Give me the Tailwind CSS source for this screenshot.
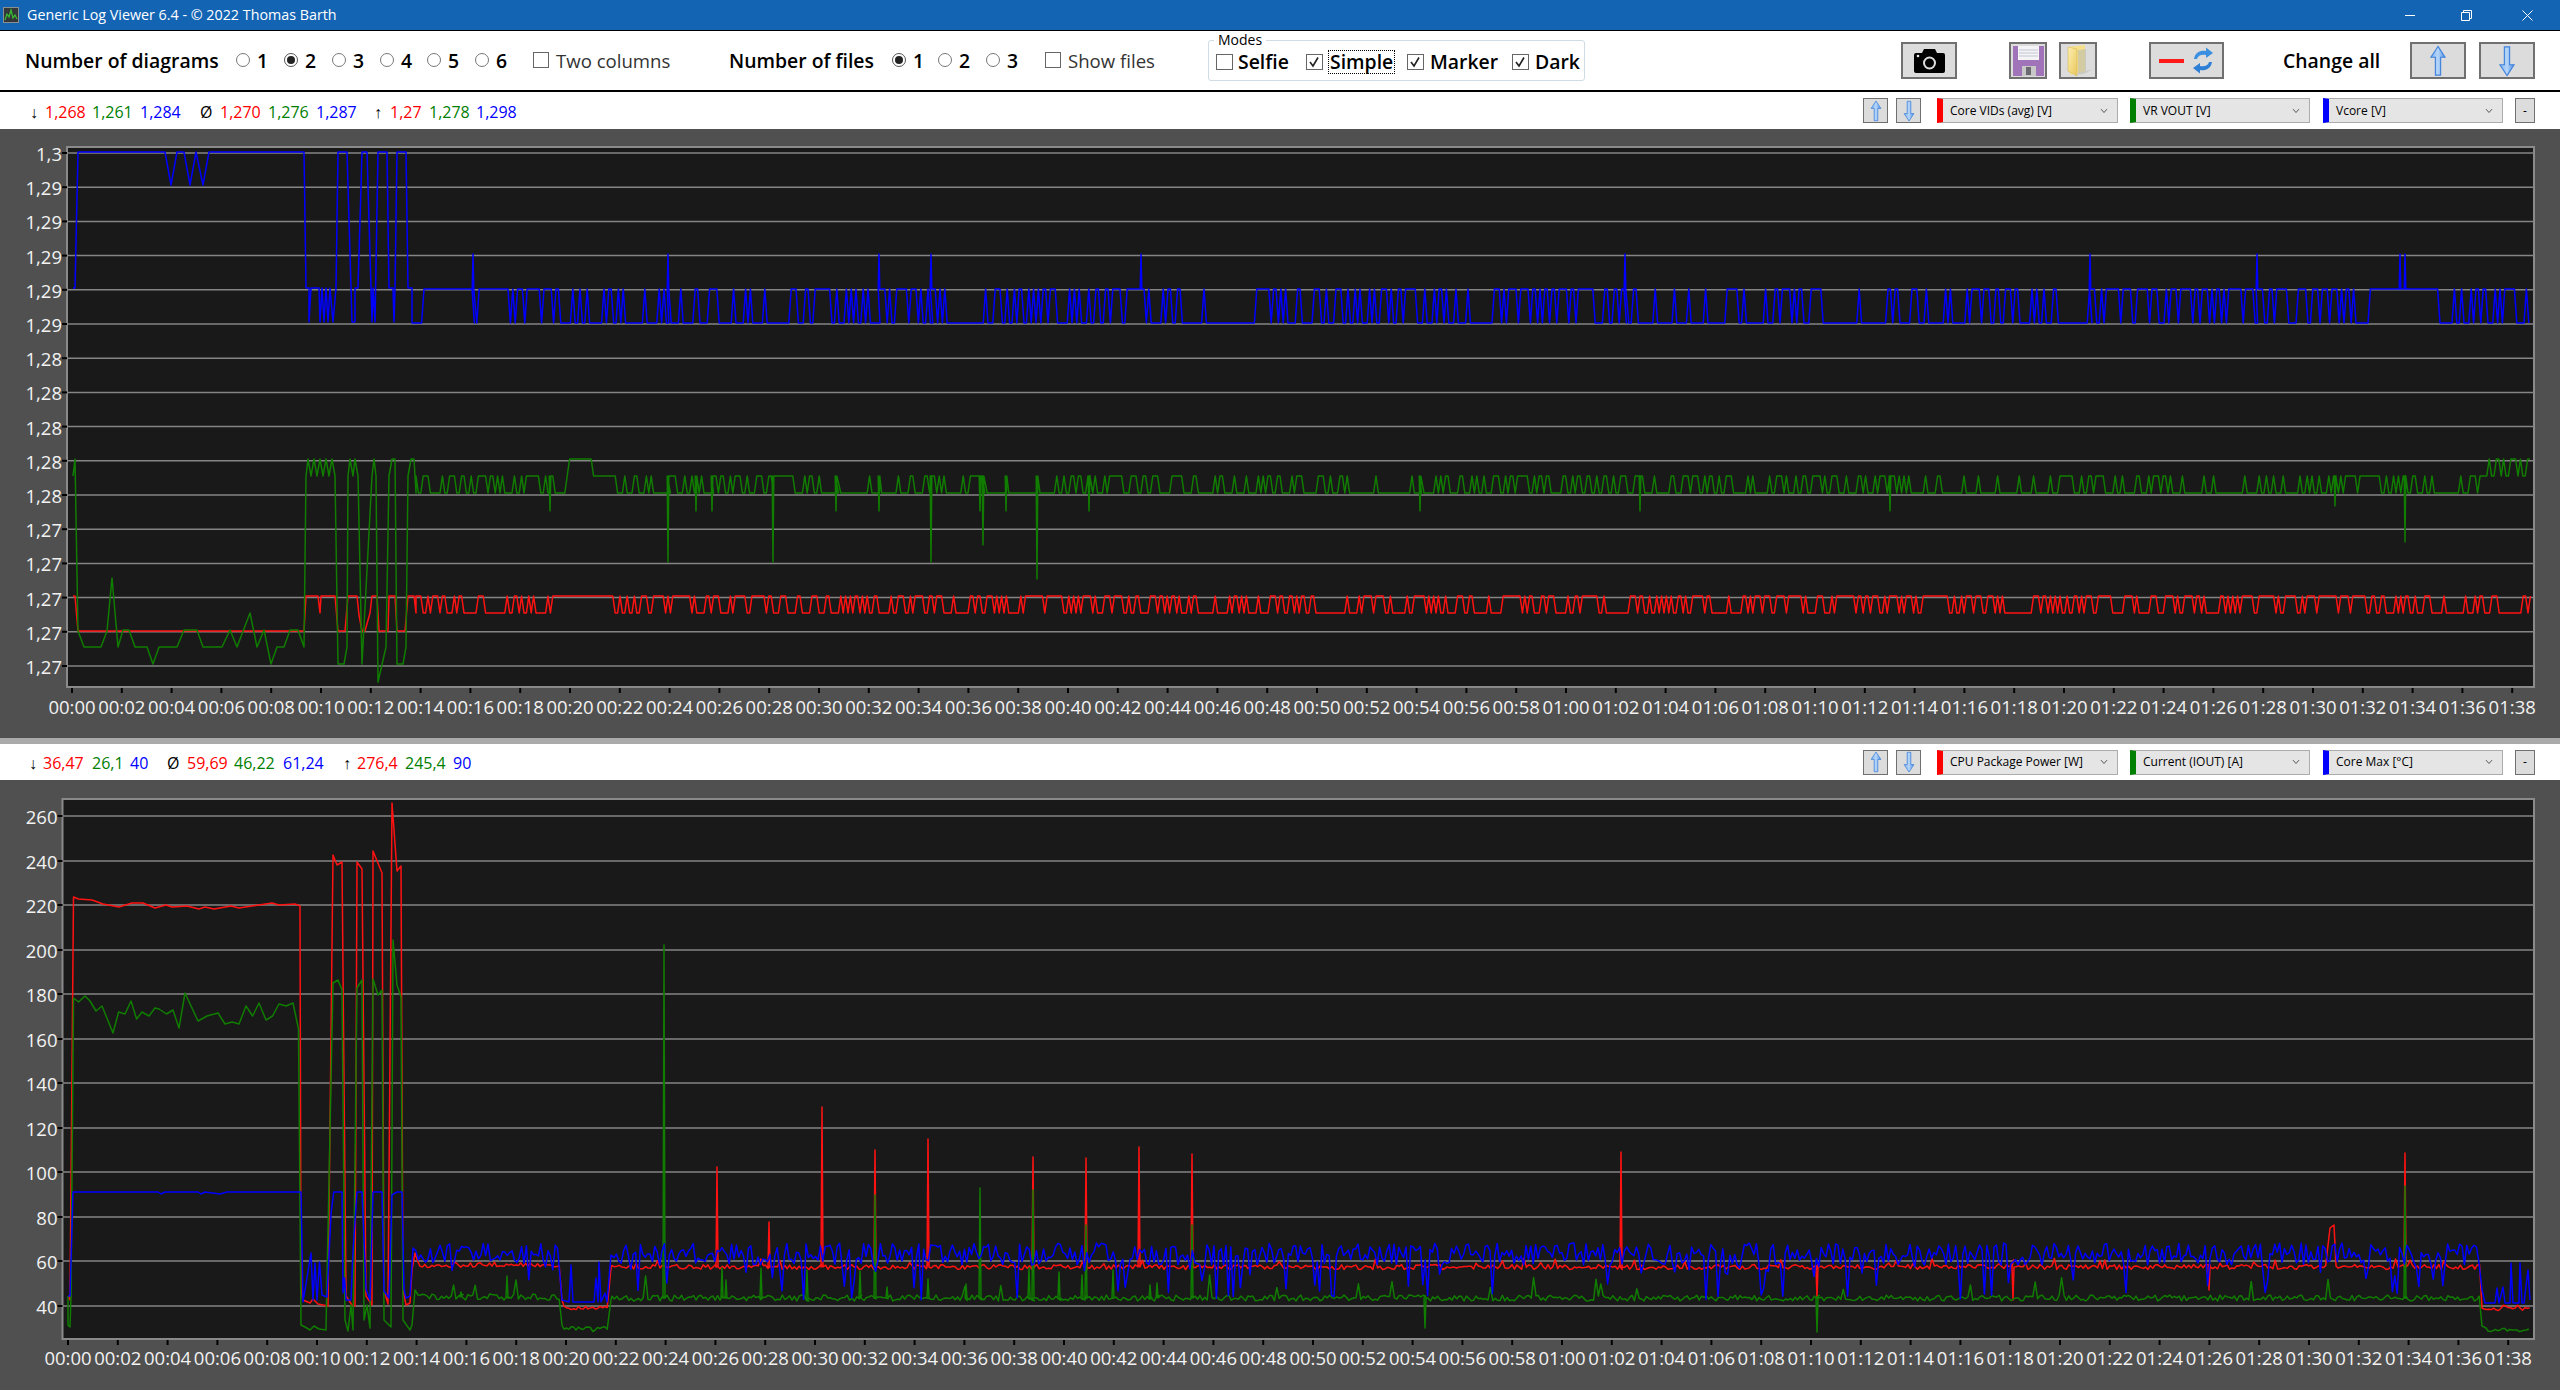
<!DOCTYPE html>
<html lang="en">
<head>
    <meta charset="UTF-8">
    <title>Generic Log Viewer 6.4</title>
    <script src="https://cdn.jsdelivr.net/npm/@tailwindcss/browser@4"></script>
</head>
<body class="w-[2560px] h-[1390px] overflow-hidden bg-white font-['Open_Sans',sans-serif] text-black">
    <svg class="absolute w-0 h-0">
        <defs>
            <linearGradient id="arrowFill" x1="0" y1="0" x2="1" y2="0">
                <stop offset="0" stop-color="#7fb2ef"/>
                <stop offset="0.5" stop-color="#b7d6f8"/>
                <stop offset="1" stop-color="#4f8fe6"/>
            </linearGradient>
            <linearGradient id="folderFill" x1="0" y1="0" x2="1" y2="1">
                <stop offset="0" stop-color="#fdf0b0"/>
                <stop offset="1" stop-color="#e9c65c"/>
            </linearGradient>
            <symbol id="arrowUp" viewBox="0 0 20 34">
                <path d="M10 1.5 L17.5 13 H12.8 V32 H7.2 V13 H2.5 Z" fill="url(#arrowFill)" stroke="#3f82dc" stroke-width="1.2"/>
            </symbol>
            <symbol id="arrowDown" viewBox="0 0 20 34">
                <path d="M10 32.5 L17.5 21 H12.8 V2 H7.2 V21 H2.5 Z" fill="url(#arrowFill)" stroke="#3f82dc" stroke-width="1.2"/>
            </symbol>
            <symbol id="chevron" viewBox="0 0 10 8">
                <path d="M1 1.5 L5 6 L9 1.5" fill="none" stroke="#555" stroke-width="1.3"/>
            </symbol>
            <symbol id="tick" viewBox="0 0 14 14">
                <path d="M3 7 L6 11 L11 2.5" fill="none" stroke="#222" stroke-width="1.6"/>
            </symbol>
        </defs>
    </svg>

    <!-- title bar -->
    <div class="h-[31px] bg-[#1464b4] border-b border-black flex items-center text-white">
        <svg class="ml-[3px] w-[16px] h-[16px]" viewBox="0 0 16 16">
            <rect x="0.5" y="0.5" width="15" height="15" fill="#33373a" stroke="#8a8f90"/>
            <path d="M2 13 L4 7 L6 10 L8 3 L10 11 L12 8 L14 12" fill="none" stroke="#38c030" stroke-width="1.2"/>
        </svg>
        <span class="ml-[8px] text-[14.3px]">Generic Log Viewer 6.4 - © 2022 Thomas Barth</span>
        <div class="ml-auto flex items-center">
            <svg class="w-[10px] h-[10px]" viewBox="0 0 10 10"><path d="M0 5.5 H10" stroke="#fff"/></svg>
            <svg class="ml-[46px] w-[11px] h-[11px]" viewBox="0 0 11 11"><path d="M0.5 2.5 H8.5 V10.5 H0.5 Z M2.5 2.5 V0.5 H10.5 V8.5 H8.5" fill="none" stroke="#fff"/></svg>
            <svg class="ml-[50px] mr-[27px] w-[11px] h-[11px]" viewBox="0 0 11 11"><path d="M0.5 0.5 L10.5 10.5 M10.5 0.5 L0.5 10.5" stroke="#fff"/></svg>
        </div>
    </div>

    <!-- toolbar -->
    <div class="h-[61px] border-b-2 border-black flex items-center pl-[25px] text-[19.4px] font-semibold">
        <span class="w-[211px] whitespace-nowrap">Number of diagrams</span>
        <label class="w-[48px] flex items-center gap-[7px]"><span class="w-[14px] h-[14px] rounded-full border border-[#777]"></span>1</label>
        <label class="w-[48px] flex items-center gap-[7px]"><span class="w-[14px] h-[14px] rounded-full border border-[#555] flex items-center justify-center"><span class="w-[8px] h-[8px] rounded-full bg-[#222]"></span></span>2</label>
        <label class="w-[48px] flex items-center gap-[7px]"><span class="w-[14px] h-[14px] rounded-full border border-[#777]"></span>3</label>
        <label class="w-[47px] flex items-center gap-[7px]"><span class="w-[14px] h-[14px] rounded-full border border-[#777]"></span>4</label>
        <label class="w-[48px] flex items-center gap-[7px]"><span class="w-[14px] h-[14px] rounded-full border border-[#777]"></span>5</label>
        <label class="w-[58px] flex items-center gap-[7px]"><span class="w-[14px] h-[14px] rounded-full border border-[#777]"></span>6</label>
        <label class="w-[196px] flex items-center gap-[7px] font-normal text-[18.6px] text-[#333]"><span class="w-[16px] h-[16px] border border-[#666]"></span>Two columns</label>
        <span class="w-[163px] whitespace-nowrap">Number of files</span>
        <label class="w-[46px] flex items-center gap-[7px]"><span class="w-[14px] h-[14px] rounded-full border border-[#555] flex items-center justify-center"><span class="w-[8px] h-[8px] rounded-full bg-[#222]"></span></span>1</label>
        <label class="w-[48px] flex items-center gap-[7px]"><span class="w-[14px] h-[14px] rounded-full border border-[#777]"></span>2</label>
        <label class="w-[59px] flex items-center gap-[7px]"><span class="w-[14px] h-[14px] rounded-full border border-[#777]"></span>3</label>
        <label class="w-[163px] flex items-center gap-[7px] font-normal text-[18.6px] text-[#333]"><span class="w-[16px] h-[16px] border border-[#666]"></span>Show files</label>

        <div class="relative w-[377px] h-[41px] border border-[#d0dce4] rounded-[3px] flex items-center pt-[3px] pl-[7px]">
            <span class="absolute left-[5px] top-[-10px] bg-white px-[4px] text-[14px] font-normal leading-[18px]">Modes</span>
            <label class="w-[90px] flex items-center gap-[5px]"><span class="w-[17px] h-[16px] border border-[#666]"></span>Selfie</label>
            <label class="w-[101px] flex items-center gap-[5px]"><span class="w-[17px] h-[16px] border border-[#666] flex"><svg class="w-[14px] h-[14px]"><use href="#tick"/></svg></span><span class="border border-dotted border-black leading-[22px] px-[1px]">Simple</span></label>
            <label class="w-[105px] flex items-center gap-[6px]"><span class="w-[17px] h-[16px] border border-[#666] flex"><svg class="w-[14px] h-[14px]"><use href="#tick"/></svg></span>Marker</label>
            <label class="flex items-center gap-[6px]"><span class="w-[17px] h-[16px] border border-[#666] flex"><svg class="w-[14px] h-[14px]"><use href="#tick"/></svg></span>Dark</label>
        </div>

        <button class="ml-[316px] w-[56px] h-[37px] bg-[#dcdcdc] border-2 border-[#707070] flex items-center justify-center">
            <svg class="w-[33px] h-[26px]" viewBox="0 0 33 26">
                <path d="M3 5 H9 L11 1 H22 L24 5 H30 Q32 5 32 7 V23 Q32 25 30 25 H3 Q1 25 1 23 V7 Q1 5 3 5 Z" fill="#000"/>
                <circle cx="16.5" cy="15" r="5.5" fill="none" stroke="#ddd" stroke-width="2"/>
                <circle cx="5" cy="8" r="1.3" fill="#eee"/>
            </svg>
        </button>
        <button class="ml-[52px] w-[38px] h-[37px] bg-[#dcdcdc] border-2 border-[#707070] flex items-center justify-center">
            <svg class="w-[33px] h-[32px]" viewBox="0 0 33 32">
                <path d="M1 1 H32 V31 H1 Z" fill="#a173b8"/>
                <path d="M6 1 H27 V15 H6 Z" fill="#f4f4f6"/>
                <path d="M7 5 H26 M7 8 H26 M7 11 H26" stroke="#c4c4d4"/>
                <path d="M10 21 H24 V31 H10 Z" fill="#c8c8c8"/>
                <path d="M14 22 H19 V30 H14 Z" fill="#6a6a70"/>
            </svg>
        </button>
        <button class="ml-[12px] w-[38px] h-[37px] bg-[#dcdcdc] border-2 border-[#707070] flex items-center justify-center">
            <svg class="w-[32px] h-[33px]" viewBox="0 0 32 33">
                <path d="M6 3 L22 1 H23 V27 L8 31 Z" fill="#f6e08c"/>
                <path d="M16 6 L24 5 V27 L30 25 L24 29 L16 31 Z" fill="#bdbdb0" opacity="0.6"/>
                <path d="M6 3 L15 5 V32 L6 27 Z" fill="url(#folderFill)" stroke="#d7b95a" stroke-width="0.6"/>
            </svg>
        </button>
        <button class="ml-[52px] w-[75px] h-[37px] bg-[#dcdcdc] border-2 border-[#707070] flex items-center pl-[8px]">
            <span class="w-[25px] h-[4px] bg-[#ff1a1a]"></span>
            <svg class="ml-[8px] w-[22px] h-[27px]" viewBox="0 0 22 27">
                <path d="M2 12 C3 5 9 3 14 4 L14 0.5 L21 6 L14 11 L14 8 C10 7 6 8 5 12 Z" fill="#3b8fe0"/>
                <path d="M20 15 C19 22 13 24 8 23 L8 26.5 L1 21 L8 16 L8 19 C12 20 16 19 17 15 Z" fill="#2f7fd6"/>
            </svg>
        </button>
        <span class="ml-[59px] w-[127px] whitespace-nowrap">Change all</span>
        <button class="w-[56px] h-[37px] bg-[#dcdcdc] border-2 border-[#707070] flex items-center justify-center"><svg class="w-[20px] h-[32px]"><use href="#arrowUp"/></svg></button>
        <button class="ml-[13px] w-[56px] h-[37px] bg-[#dcdcdc] border-2 border-[#707070] flex items-center justify-center"><svg class="w-[20px] h-[32px]"><use href="#arrowDown"/></svg></button>
    </div>

    <!-- diagram 1 header -->
    <div class="h-[37px] flex items-center pl-[30px] pr-[25px] text-[16px] whitespace-nowrap">
        <span class="w-[15px] pt-[2px]">↓</span>
        <span class="w-[47px] pt-[2px] text-[#ff0000]">1,268</span>
        <span class="w-[48px] pt-[2px] text-[#008000]">1,261</span>
        <span class="w-[60px] pt-[2px] text-[#0000ff]">1,284</span>
        <span class="w-[20px] pt-[2px]">Ø</span>
        <span class="w-[48px] pt-[2px] text-[#ff0000]">1,270</span>
        <span class="w-[48px] pt-[2px] text-[#008000]">1,276</span>
        <span class="w-[58px] pt-[2px] text-[#0000ff]">1,287</span>
        <span class="w-[16px] pt-[2px]">↑</span>
        <span class="w-[39px] pt-[2px] text-[#ff0000]">1,27</span>
        <span class="w-[47px] pt-[2px] text-[#008000]">1,278</span>
        <span class="pt-[2px] text-[#0000ff]">1,298</span>
        <div class="ml-auto flex items-center h-[25px] text-[12px]">
            <button class="w-[25px] h-[25px] bg-[#dcdcdc] border border-[#707070] flex items-center justify-center"><svg class="w-[14px] h-[22px]"><use href="#arrowUp"/></svg></button>
            <button class="ml-[8px] w-[25px] h-[25px] bg-[#dcdcdc] border border-[#707070] flex items-center justify-center"><svg class="w-[14px] h-[22px]"><use href="#arrowDown"/></svg></button>
            <div class="ml-[16px] w-[181px] h-[25px] flex items-center bg-[#e5e5e5] border border-[#acacac] border-l-[6px] border-l-[#ff0000] pl-[7px] pr-[9px]"><span>Core VIDs (avg) [V]</span><svg class="ml-auto w-[8px] h-[6px]"><use href="#chevron"/></svg></div>
            <div class="ml-[12px] w-[180px] h-[25px] flex items-center bg-[#e5e5e5] border border-[#acacac] border-l-[6px] border-l-[#008000] pl-[7px] pr-[9px]"><span>VR VOUT [V]</span><svg class="ml-auto w-[8px] h-[6px]"><use href="#chevron"/></svg></div>
            <div class="ml-[13px] w-[180px] h-[25px] flex items-center bg-[#e5e5e5] border border-[#acacac] border-l-[6px] border-l-[#0000ff] pl-[7px] pr-[9px]"><span>Vcore [V]</span><svg class="ml-auto w-[8px] h-[6px]"><use href="#chevron"/></svg></div>
            <button class="ml-[12px] w-[20px] h-[25px] bg-[#dcdcdc] border border-[#707070]">-</button>
        </div>
    </div>

    <svg id="chart1" class="block w-[2560px] h-[609px] bg-[#505050] fill-[#f2f2f2] text-[18.5px]" viewBox="0 129 2560 609"></svg>
    <div class="h-[6px] bg-[#aaaaaa]"></div>

    <!-- diagram 2 header -->
    <div class="h-[36px] flex items-center pl-[29px] pr-[25px] text-[16px] whitespace-nowrap">
        <span class="w-[14px] pt-[1px]">↓</span>
        <span class="w-[49px] pt-[1px] text-[#ff0000]">36,47</span>
        <span class="w-[38px] pt-[1px] text-[#008000]">26,1</span>
        <span class="w-[37px] pt-[1px] text-[#0000ff]">40</span>
        <span class="w-[20px] pt-[1px]">Ø</span>
        <span class="w-[47px] pt-[1px] text-[#ff0000]">59,69</span>
        <span class="w-[49px] pt-[1px] text-[#008000]">46,22</span>
        <span class="w-[60px] pt-[1px] text-[#0000ff]">61,24</span>
        <span class="w-[14px] pt-[1px]">↑</span>
        <span class="w-[48px] pt-[1px] text-[#ff0000]">276,4</span>
        <span class="w-[48px] pt-[1px] text-[#008000]">245,4</span>
        <span class="pt-[1px] text-[#0000ff]">90</span>
        <div class="ml-auto flex items-center h-[25px] text-[12px]">
            <button class="w-[25px] h-[25px] bg-[#dcdcdc] border border-[#707070] flex items-center justify-center"><svg class="w-[14px] h-[22px]"><use href="#arrowUp"/></svg></button>
            <button class="ml-[8px] w-[25px] h-[25px] bg-[#dcdcdc] border border-[#707070] flex items-center justify-center"><svg class="w-[14px] h-[22px]"><use href="#arrowDown"/></svg></button>
            <div class="ml-[16px] w-[181px] h-[25px] flex items-center bg-[#e5e5e5] border border-[#acacac] border-l-[6px] border-l-[#ff0000] pl-[7px] pr-[9px]"><span>CPU Package Power [W]</span><svg class="ml-auto w-[8px] h-[6px]"><use href="#chevron"/></svg></div>
            <div class="ml-[12px] w-[180px] h-[25px] flex items-center bg-[#e5e5e5] border border-[#acacac] border-l-[6px] border-l-[#008000] pl-[7px] pr-[9px]"><span>Current (IOUT) [A]</span><svg class="ml-auto w-[8px] h-[6px]"><use href="#chevron"/></svg></div>
            <div class="ml-[13px] w-[180px] h-[25px] flex items-center bg-[#e5e5e5] border border-[#acacac] border-l-[6px] border-l-[#0000ff] pl-[7px] pr-[9px]"><span>Core Max [°C]</span><svg class="ml-auto w-[8px] h-[6px]"><use href="#chevron"/></svg></div>
            <button class="ml-[12px] w-[20px] h-[25px] bg-[#dcdcdc] border border-[#707070]">-</button>
        </div>
    </div>

    <svg id="chart2" class="block w-[2560px] h-[610px] bg-[#505050] fill-[#f2f2f2] text-[18.5px]" viewBox="0 780 2560 610"></svg>

    <script>
        // small seeded generator so the traces come out the same on every load
        let seed = 20220;
        function rnd() {
            seed = (seed + 0x6D2B79F5) | 0;
            let t = Math.imul(seed ^ (seed >>> 15), 1 | seed);
            t = (t + Math.imul(t ^ (t >>> 7), 61 | t)) ^ t;
            return ((t ^ (t >>> 14)) >>> 0) / 4294967296;
        }

        const RED = '#ff1212', GREEN = '#107c00', BLUE = '#0000ff';
        const STEP = 2.4;

        function timeLabels() {
            const out = [];
            for (let s = 0; s <= 98; s += 2) {
                out.push(('0' + Math.floor(s / 60)).slice(-2) + ':' + ('0' + (s % 60)).slice(-2));
            }
            return out;
        }

        // two level trace used by the voltage diagram, busy and calm stretches alternate
        function twoLevel(x0, x1, hi, lo, odds, flats, spikes) {
            const pts = [];
            let left = 0, p = 0.5;
            const todo = spikes.slice();
            for (let x = x0; x < x1; x += STEP) {
                if (left-- <= 0) { left = 8 + rnd() * 30; p = odds[Math.floor(rnd() * odds.length)]; }
                let y = rnd() < p ? hi : lo;
                for (const f of flats) if (x >= f[0] && x <= f[1]) y = f[2];
                pts.push([x, y]);
                while (todo.length && todo[0][0] <= x) {
                    const s = todo.shift();
                    pts.push([s[0] - 0.8, hi], [s[0], s[1]], [s[0] + 0.8, hi]);
                }
            }
            return pts;
        }

        // noisy trace for the power diagram: base +- noise, with occasional excursions
        function noisy(x0, x1, base, noise, pEx, exLo, exHi, spikes) {
            const pts = [];
            const todo = spikes.slice();
            for (let x = x0; x < x1; x += STEP) {
                let y = base + (rnd() - 0.5) * noise;
                if (rnd() < pEx) y = base + exLo + rnd() * (exHi - exLo);
                pts.push([x, y]);
                while (todo.length && todo[0][0] <= x) {
                    const s = todo.shift();
                    pts.push([s[0] - 1, base], [s[0], s[1]], [s[0] + 1, base]);
                }
            }
            return pts;
        }

        function line(pts, color) {
            return '<polyline fill="none" stroke="' + color + '" stroke-width="1.5" stroke-linejoin="round" points="' +
                pts.map(p => p[0].toFixed(1) + ',' + p[1].toFixed(1)).join(' ') + '"/>';
        }

        function drawChart(el, o) {
            let s = '<rect x="' + o.left + '" y="' + o.top + '" width="' + (o.right - o.left) + '" height="' + (o.bottom - o.top) + '" fill="#191919" stroke="#8a8a8a" stroke-width="2"/>';
            o.grid.forEach(g => {
                s += '<path d="M' + o.left + ' ' + g[0] + 'H' + o.right + '" stroke="#858585" stroke-width="1.5"/>';
                s += '<path d="M' + (o.left - 5) + ' ' + g[0] + 'H' + o.left + '" stroke="#000" stroke-width="2"/>';
                s += '<text x="' + (o.left - 5) + '" y="' + (g[0] + 8) + '" text-anchor="end">' + g[1] + '</text>';
            });
            timeLabels().forEach((t, i) => {
                const x = o.x0 + i * 49.8;
                s += '<path d="M' + x.toFixed(1) + ' ' + (o.bottom + 1) + 'v5" stroke="#000" stroke-width="2"/>';
                s += '<text x="' + x.toFixed(1) + '" y="' + o.labelY + '" text-anchor="middle">' + t + '</text>';
            });
            s += line(o.red, RED) + line(o.green, GREEN) + line(o.blue, BLUE);
            el.innerHTML = s;
        }

        // ---- voltage diagram
        const grid1 = [];
        ['1,3', '1,29', '1,29', '1,29', '1,29', '1,29', '1,28', '1,28', '1,28', '1,28', '1,28', '1,27', '1,27', '1,27', '1,27', '1,27']
            .forEach((t, i) => grid1.push([153 + i * 34.2, t]));

        const blue1 = [[73,288],[75,288],[78,152],[165,152],[171,185],[177,152],[184,152],[190,185],[196,152],[203,185],[209,152],[304,152],[306,288],
            [309,288],[309,322],[311,288],[319,288],[320,322],[322,288],[324,322],[326,288],[328,322],[330,288],[333,322],[336,288],[338,152],[347,152],[352,322],[355,322],[355,288],[358,288],[362,152],[367,152],[372,322],[373,288],[375,322],[378,152],[387,152],[389,288],[393,288],[394,322],[395,288],[397,152],[406,152],[408,288],[412,288]]
            .concat(twoLevel(412, 2531, 289, 323, [0.72, 0.5, 0.4, 0.3, 0.15],
                [[425,472,289],[483,506,289],[949,983,323],[2370,2440,289]],
                [[473,254],[668,254],[879,254],[931,254],[1141,254],[1625,254],[2090,254],[2257,254],[2400,254],[2405,254]]));

        const green1 = [[73,476],[75,459],[78,631],[84,647],[101,647],[107,631],[112,578],[118,647],[123,630],[129,630],[135,647],[147,647],[153,664],[159,647],[177,647],[184,630],[197,630],[203,647],[222,647],[230,630],[237,647],[250,613],[257,647],[264,630],[271,664],[277,647],[284,647],[290,630],[298,630],[304,647],
            [306,476],[308,459],[311,476],[314,459],[317,476],[320,459],[323,476],[326,459],[329,476],[332,459],[335,476],[338,664],[344,664],[347,647],[348,476],[350,459],[353,476],[355,459],[358,476],[362,664],[372,476],[374,459],[376,476],[378,682],[386,647],[389,476],[392,459],[395,459],[397,664],[403,664],[406,647],[408,476],[411,459],[414,459],[416,493]]
            .concat(twoLevel(416, 2482, 476, 493, [0.1, 0.45, 0.5, 0.35, 0.55],
                [[569,593,459],[593,614,476],[775,790,476]],
                [[550,511],[668,562],[696,511],[712,511],[773,562],[836,511],[879,511],[931,562],[980,511],[983,545],[1006,511],[1037,579],[1089,511],[1420,511],[1640,511],[1890,511],[2335,506],[2405,542]]))
            .concat(twoLevel(2482, 2531, 459, 476, [0.5], [], []));

        const red1 = [[73,596],[75,596],[78,631],[304,631],[306,596],[318,596],[320,613],[321,596],[335,596],[338,631],[345,631],[348,596],[357,596],[359,615],[362,631],[365,631],[370,613],[372,596],[377,596],[379,631],[388,631],[389,596],[395,596],[397,631],[405,631],[408,596],[414,596],[416,613]]
            .concat(twoLevel(416, 2531, 596, 613, [0.7, 0.45, 0.35, 0.5], [[558,614,596],[1806,1816,613]], []));

        drawChart(document.getElementById('chart1'), {
            left: 67, right: 2534, top: 147, bottom: 687, x0: 72, labelY: 713.5,
            grid: grid1, red: red1, green: green1, blue: blue1
        });

        // ---- power diagram
        const grid2 = [];
        for (let v = 260; v >= 40; v -= 20) grid2.push([Math.round(1306 - (v - 40) * 2.2273), String(v)]);

        const commonSpikes = [[664,945],[722,1268],[726,1280],[761,1268],[807,1270],[860,1271],[875,1195],[887,1287],[928,1279],[966,1284],[980,1188],[1029,1268],[1033,1190],[1059,1272],[1082,1275],[1086,1225],[1113,1270],[1150,1285],[1157,1283],[1192,1225],[1425,1328],[1817,1332],[2405,1186]];

        const red2 = [[68,1296],[70,1300],[73.5,897],[78.5,899],[92,900],[103,904],[119,907],[132,903],[143,903],[155,908],[166,905],[172,907],[187,906],[199,909],[205,907],[214,909],[231,906],[239,908],[252,906],[272,903],[279,905],[295,904],[300,906],[301,1289],
            [303,1300],[310,1303],[313,1299],[318,1304],[328,1306],[333,855],[337,865],[342,862],[346,1296],[352,1305],[355,1306],[357,862],[362,869],[366,1296],[372,1305],[373,851],[382,873],[384,1290],[388,1304],[392,803],[397,871],[401,866],[403,1290],[406,1305],[410,1303],[412,1270],[415,1253],[418,1262]]
            .concat(noisy(420, 560, 1265, 5, 0.03, -8, -2, []))
            .concat([[562,1300]], noisy(564, 609, 1308, 3.5, 0.03, -8, -4, []), [[611,1268]])
            .concat(noisy(612, 2328, 1267, 5, 0.05, -9, -3, [[717,1167],[769,1222],[822,1107],[875,1150],[928,1139],[1033,1157],[1086,1158],[1139,1147],[1192,1154],[1621,1152],[1817,1297],[2013,1300],[2209,1290]]))
            .concat([[2330,1228],[2334,1225],[2336,1266]])
            .concat(noisy(2338, 2480, 1267, 5, 0.05, -9, -3, [[2405,1153]]))
            .concat([[2482,1308]], noisy(2484, 2530, 1309, 3, 0.06, -5, -3, []));

        const green2 = [[68,1296],[68,1325],[70,1327],[71,1296],[73.5,998],[78.5,1002],[85,996],[90,1001],[96,1011],[102,1006],[113,1033],[118.6,1012],[125,1014],[131,1001],[136.6,1019],[142,1012],[149,1016],[155,1008],[159,1009],[166.5,1014],[173,1010],[179,1028],[185,993],[198,1021],[207,1016],[218,1013],[225,1024],[232,1022],[239,1024],[246,1006],[252.6,1016],[259,1003],[266,1020],[272.5,1016],[279,1004],[286,1006],[293,1003],[298.5,1029],[301,1325],
            [305,1327],[310,1330],[314,1326],[319,1329],[326,1330],[333,983],[338,980],[342,990],[345,1320],[348,1331],[351,1305],[353,1330],[357,988],[362,980],[364,1320],[367,1305],[370,1328],[373,979],[378,995],[382,990],[384,1320],[391,1327],[393,940],[397,985],[401,997],[403,1320],[410,1330],[412,1325],[415,1290],[418,1295]]
            .concat(noisy(420, 560, 1297, 6, 0.06, -20, -6, [[461,1292],[507,1276]]))
            .concat([[562,1325]], noisy(564, 609, 1329, 5, 0.03, -11, -5, []), [[611,1300]])
            .concat(noisy(612, 2480, 1298, 6, 0.03, -26, -8, commonSpikes))
            .concat([[2482,1326],[2486,1328]], noisy(2488, 2530, 1330, 4, 0, 0, 0, []));

        const blue2 = [[68,1296],[70,1296],[73,1192],[158,1192],[161,1194],[165,1192],[198,1192],[201,1194],[205,1192],[220,1194],[227,1192],[301,1192],[303,1302],[311,1253],[313,1300],[315,1263],[317,1300],[319.5,1262],[322,1295],[327,1297],[331,1214],[333.7,1192],[342,1192],[343,1293],[344.5,1278],[346,1300],[351,1300],[353,1251],[357,1192],[362,1192],[366,1289],[370,1300],[373,1192],[382,1192],[384,1291],[389,1298],[392,1195],[397,1192],[402,1192],[404,1289],[406,1298],[410,1296],[413,1248]]
            .concat(noisy(416, 559, 1253, 20, 0.08, 8, 38, []))
            .concat([[562,1300],[569,1302],[571,1265],[573,1302],[594,1302],[596,1278],[598,1302],[599,1262],[601,1302],[605,1293],[607,1302],[611,1255]])
            .concat(noisy(614, 2480, 1254, 22, 0.09, 10, 46, []))
            .concat([[2482,1290],[2485,1303],[2495,1303],[2497,1288],[2499,1303],[2503,1287],[2505,1303],[2510,1303],[2511,1263],[2513,1303],[2519,1303],[2520,1263],[2522,1303],[2524,1303],[2528,1270],[2530,1300]]);

        drawChart(document.getElementById('chart2'), {
            left: 62.5, right: 2534, top: 799, bottom: 1339, x0: 68, labelY: 1365,
            grid: grid2, red: red2, green: green2, blue: blue2
        });
    </script>
</body>
</html>
